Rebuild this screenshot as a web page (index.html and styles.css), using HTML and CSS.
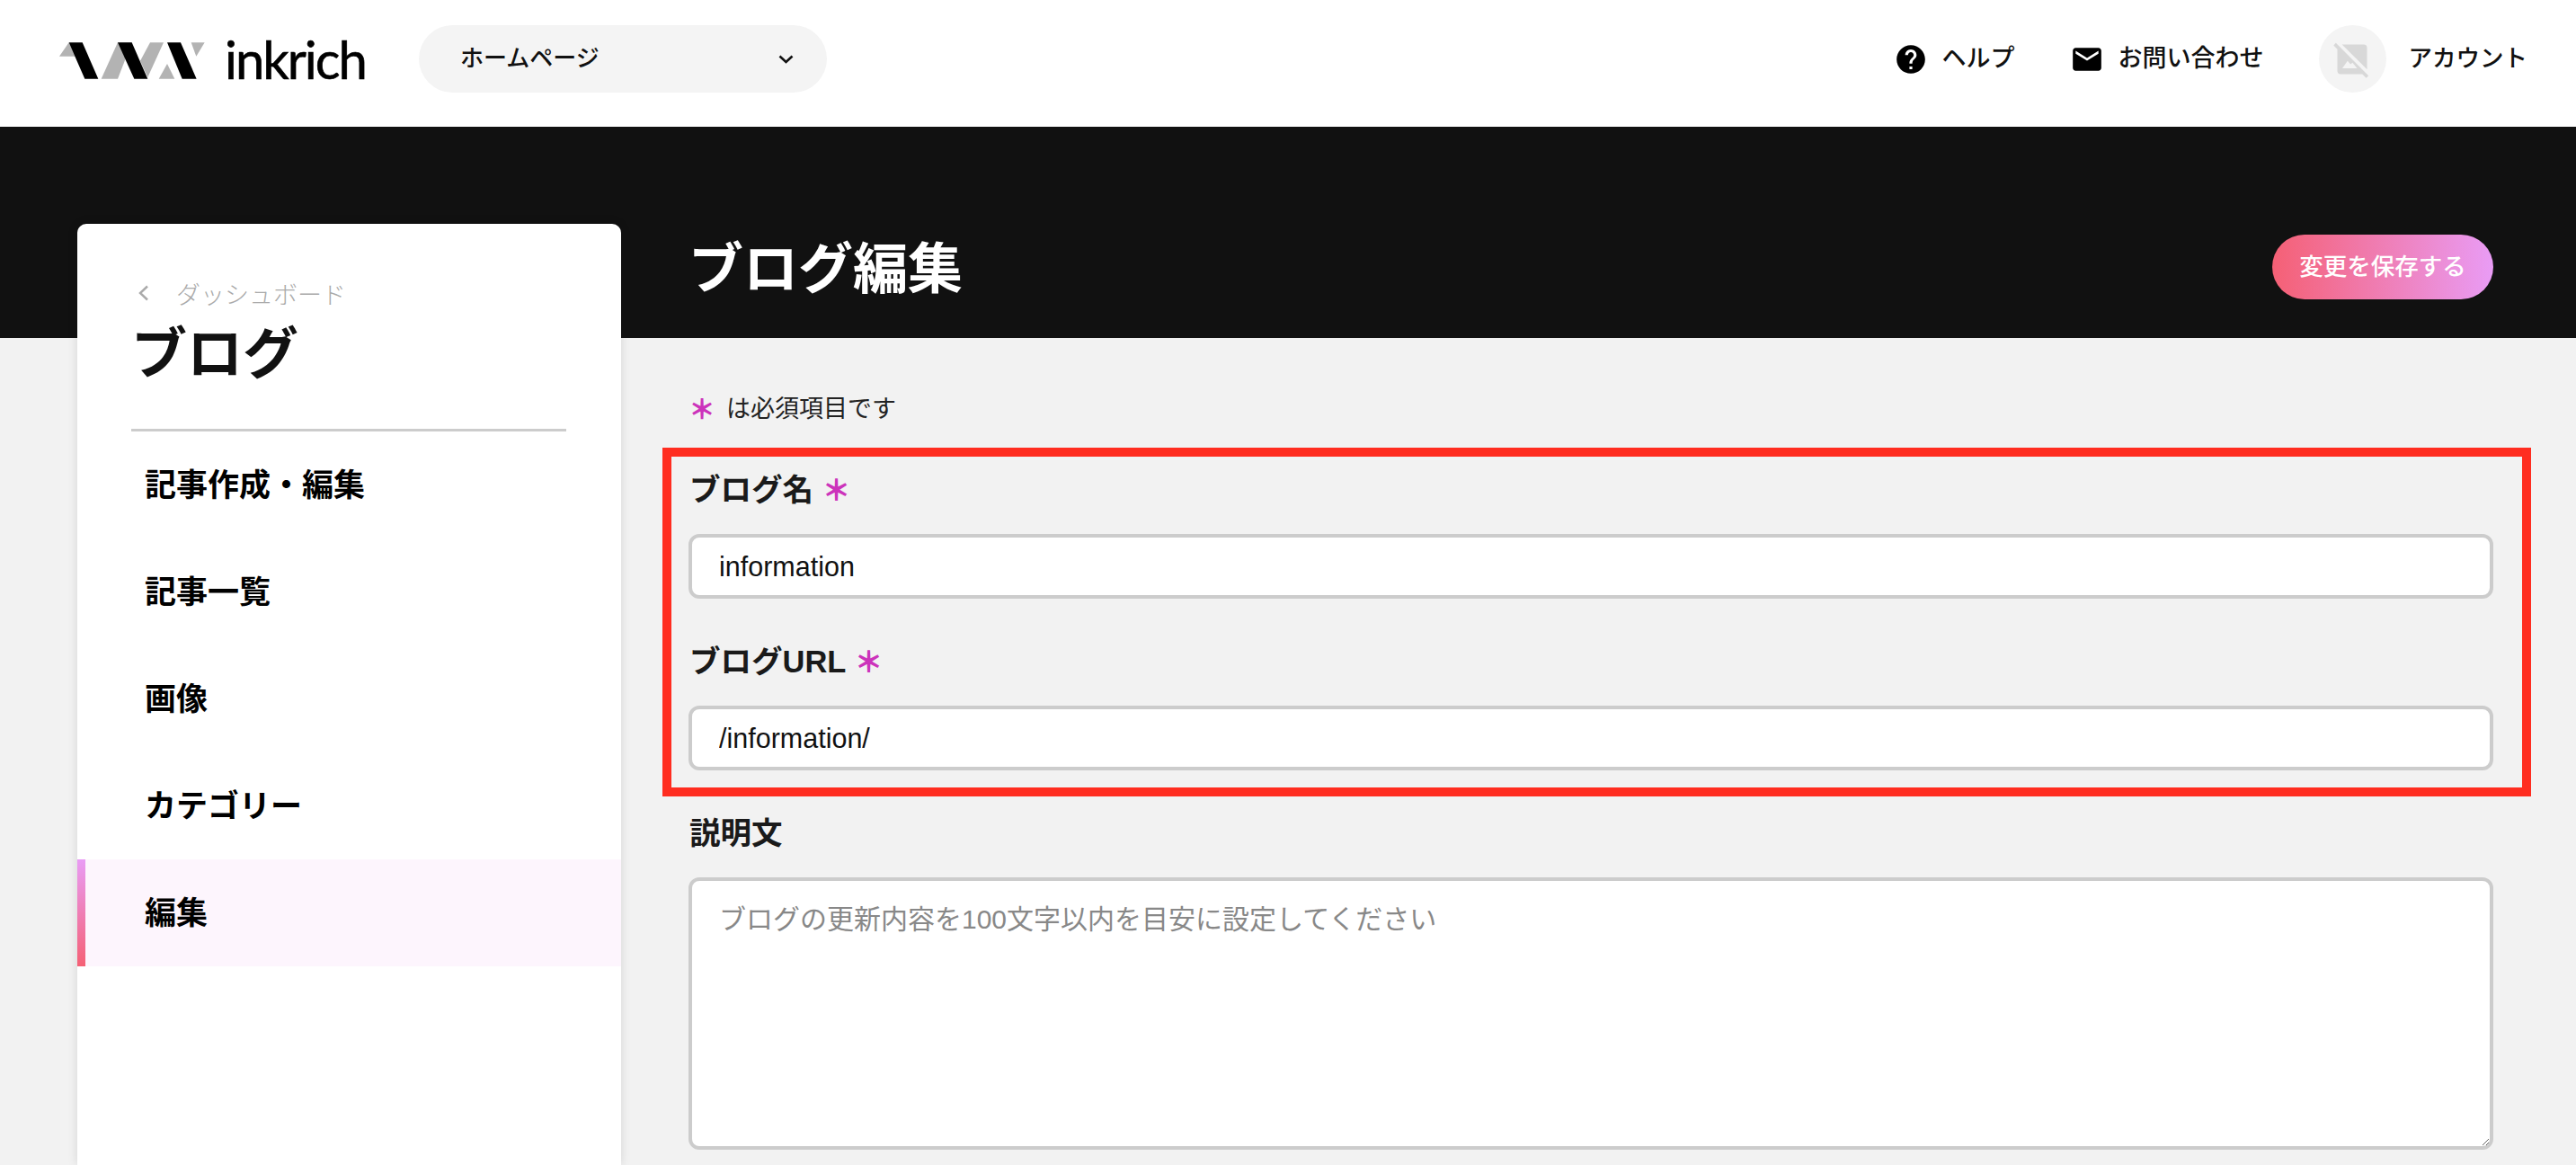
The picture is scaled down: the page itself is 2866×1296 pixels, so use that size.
FILE: index.html
```html
<!DOCTYPE html>
<html lang="ja">
<head>
<meta charset="utf-8">
<title>ブログ編集</title>
<link rel="stylesheet" href="styles.css">
</head>
<body>
<header class="topbar">
  <a class="brand">
    <svg class="brand-mark" viewBox="0 0 540 180" aria-hidden="true">
      <g fill="#b3b3b3">
        <polygon points="62,34 30,80 85,80"/>
        <polygon points="225,34 272,34 225,155 170,155"/>
        <polygon points="333,34 378,34 325,150 300,95"/>
        <polygon points="390,105 415,155 362,155"/>
        <polygon points="470,34 515,34 487,80"/>
      </g>
      <g fill="#000">
        <polygon points="62,34 107,34 160,155 115,155"/>
        <polygon points="225,34 272,34 325,155 280,155"/>
        <polygon points="390,34 435,34 488,155 440,155"/>
      </g>
    </svg>
    <span class="brand-name">inkrich</span>
  </a>
  <div class="site-select">
    <span class="top-text site-name">ホームページ</span>
    <svg class="site-chevron" viewBox="0 0 17 10" aria-hidden="true"><polyline points="1.5,1.5 8.5,8 15.5,1.5"/></svg>
  </div>
  <nav class="top-links">
    <a class="top-link">
      <svg class="top-icon" viewBox="0 0 24 24" aria-hidden="true"><path d="M12 2C6.48 2 2 6.48 2 12s4.48 10 10 10 10-4.48 10-10S17.52 2 12 2zm1 17h-2v-2h2v2zm2.07-7.75l-.9.92C13.45 12.9 13 13.5 13 15h-2v-.5c0-1.1.45-2.1 1.17-2.83l1.24-1.26c.37-.36.59-.86.59-1.41 0-1.1-.9-2-2-2s-2 .9-2 2H8c0-2.21 1.79-4 4-4s4 1.79 4 4c0 .88-.36 1.68-.93 2.25z"/></svg>
      <span class="top-text">ヘルプ</span>
    </a>
    <a class="top-link">
      <svg class="top-icon" viewBox="0 0 24 24" aria-hidden="true"><path d="M20 4H4c-1.1 0-1.99.9-1.99 2L2 18c0 1.1.9 2 2 2h16c1.1 0 2-.9 2-2V6c0-1.1-.9-2-2-2zm0 4l-8 5-8-5V6l8 5 8-5v2z"/></svg>
      <span class="top-text">お問い合わせ</span>
    </a>
    <a class="account">
      <span class="avatar">
        <svg class="avatar-icon" viewBox="0 0 24 24" aria-hidden="true">
          <path d="M21 18.17 5.83 3H19a2 2 0 0 1 2 2z"/>
          <path d="M20.49 23.31 18.17 21H5a2 2 0 0 1-2-2V5.83L.69 3.51 2.1 2.1l19.8 19.8z"/>
          <polygon class="avatar-peak" points="6,17.5 9.2,13 11,15 12.2,14 15,17.5"/>
        </svg>
      </span>
      <span class="top-text account-name">アカウント</span>
    </a>
  </nav>
</header>

<main class="layout">
  <aside class="sidebar">
    <div class="side-head">
      <a class="back">
        <svg class="back-chevron" viewBox="0 0 13 18" aria-hidden="true"><polyline points="11,1.5 3,9 11,16.5"/></svg>
        <span>ダッシュボード</span>
      </a>
      <h2 class="side-title">ブログ</h2>
    </div>
    <ul class="side-nav">
      <li class="side-item">記事作成・編集</li>
      <li class="side-item">記事一覧</li>
      <li class="side-item">画像</li>
      <li class="side-item">カテゴリー</li>
      <li class="side-item is-active">編集</li>
    </ul>
  </aside>

  <section class="content">
    <div class="page-head">
      <h1 class="page-title">ブログ編集</h1>
      <button class="save-btn" type="button">変更を保存する</button>
    </div>
    <form class="form">
      <p class="req-note"><span class="req">＊</span><span>は必須項目です</span></p>
      <div class="highlight">
        <div class="field">
          <label class="field-label">ブログ名 <span class="req">＊</span></label>
          <input class="input" type="text" value="information">
        </div>
        <div class="field">
          <label class="field-label">ブログURL <span class="req">＊</span></label>
          <input class="input" type="text" value="/information/">
        </div>
      </div>
      <div class="field field-desc">
        <label class="field-label">説明文</label>
        <textarea class="input textarea" placeholder="ブログの更新内容を100文字以内を目安に設定してください"></textarea>
      </div>
    </form>
  </section>
</main>
</body>
</html>
```

FILE: styles.css
```css
* { box-sizing: border-box; }

html, body {
  margin: 0;
}

body {
  height: 1296px;
  overflow: hidden;
  font-family: "Liberation Sans", "Noto Sans CJK JP", sans-serif;
  color: #111;
  background: #f2f2f2;
}

/* top bar */
.topbar {
  display: flex;
  align-items: center;
  height: 141px;
  padding: 0 54px 10px 56px;
  background: #fff;
}

.brand {
  display: flex;
  align-items: center;
  width: 410px;
}

.brand-mark {
  width: 180px;
  height: 60px;
  flex: none;
}

.brand-name {
  margin-left: 14px;
  font-family: "Lato", sans-serif;
  font-size: 58px;
  line-height: 60px;
  letter-spacing: -2px;
  color: #000;
  -webkit-text-stroke: 0.6px #000;
}

.site-select {
  display: flex;
  align-items: center;
  justify-content: space-between;
  width: 454px;
  height: 75px;
  padding: 0 37px 0 46px;
  border-radius: 38px;
  background: #f4f4f4;
}

.top-text {
  padding-bottom: 2px;
  font-size: 27px;
  line-height: 40px;
  font-weight: 500;
}

.site-name {
  font-size: 26px;
}

.site-chevron {
  width: 17px;
  height: 10px;
  fill: none;
  stroke: #111;
  stroke-width: 2.6;
}

.top-links {
  display: flex;
  align-items: center;
  gap: 61px;
  margin-left: auto;
}

.top-link {
  display: flex;
  align-items: center;
  gap: 16px;
}

.top-icon {
  width: 38px;
  height: 38px;
  fill: #000;
}

.account {
  display: flex;
  align-items: center;
  gap: 25px;
}

.account-name {
  font-size: 26.5px;
}

.avatar {
  display: flex;
  align-items: center;
  justify-content: center;
  width: 75px;
  height: 75px;
  border-radius: 50%;
  background: #f4f4f4;
}

.avatar-icon {
  width: 44px;
  height: 44px;
  fill: #d8d8d8;
}

.avatar .avatar-peak {
  fill: #f4f4f4;
}

/* page body */
.layout {
  display: flex;
  height: 1155px;
  padding: 108px 92px 0 86px;
  background: linear-gradient(#111 235px, #f2f2f2 235px);
}

.sidebar {
  flex: none;
  width: 605px;
  height: 1047px;
  border-radius: 10px 10px 0 0;
  background: #fff;
  box-shadow: 0 0 12px rgba(0, 0, 0, 0.12);
}

.side-head {
  height: 231px;
  margin: 0 61px 0 60px;
  padding-top: 62px;
  border-bottom: 3px solid #ccc;
}

.back {
  display: flex;
  align-items: center;
  gap: 30px;
  height: 30px;
  padding-left: 7px;
  font-size: 27px;
  font-weight: 300;
  color: #aaa;
}

.back-chevron {
  width: 13px;
  height: 18px;
  fill: none;
  stroke: #aaa;
  stroke-width: 2.4;
}

.side-title {
  margin: 15px 0 0 0;
  font-size: 62px;
  line-height: 78px;
  font-weight: 700;
  color: #111;
}

.side-nav {
  margin: 0;
  padding: 0;
  list-style: none;
}

.side-item {
  display: flex;
  align-items: center;
  height: 119px;
  padding: 0 0 7px 75px;
  font-size: 35px;
  font-weight: 700;
  color: #000;
}

.side-item.is-active {
  position: relative;
  background: #fdf5fd;
}

.side-item.is-active::before {
  content: "";
  position: absolute;
  left: 0;
  top: 0;
  bottom: 0;
  width: 9px;
  background: linear-gradient(#e99cf5, #f56075);
}

/* main column */
.content {
  flex: 1;
  min-width: 0;
  margin-left: 75px;
}

.page-head {
  display: flex;
  align-items: center;
  justify-content: space-between;
  height: 127px;
  padding-bottom: 31px;
}

.page-title {
  margin: 6px 0 0 0;
  font-size: 61px;
  line-height: 80px;
  font-weight: 700;
  color: #fff;
}

.save-btn {
  width: 246px;
  height: 72px;
  padding: 0 0 5px;
  border: 0;
  border-radius: 36px;
  background: linear-gradient(90deg, #f56075, #e99cf5);
  font-family: inherit;
  font-size: 26.5px;
  font-weight: 500;
  color: #fff;
}

.form {
  padding-top: 59px;
}

.req-note {
  display: flex;
  align-items: center;
  gap: 12px;
  height: 40px;
  margin: 0;
  padding: 0 0 5px 0;
  font-size: 27px;
  font-weight: 400;
  color: #222;
}

.req {
  font-family: "Noto Sans CJK JP", sans-serif;
  font-size: 30px;
  font-weight: 900;
  color: #cc33bb;
}

.highlight {
  display: flex;
  flex-direction: column;
  gap: 47px;
  margin: 23px -42px 0 -29px;
  padding: 14px 32px 19px 19px;
  border: 10px solid #ff2d20;
}

.field {
  display: flex;
  flex-direction: column;
  gap: 24px;
}

.field-desc {
  margin-top: 18px;
}

.field-label {
  height: 48px;
  padding-left: 1px;
  font-size: 34.5px;
  line-height: 46px;
  font-weight: 700;
  color: #1a1a1a;
}

.field-label .req {
  font-size: 32px;
  line-height: 0;
}

.input {
  display: block;
  width: 100%;
  height: 72px;
  padding: 0 30px;
  border: 4px solid #ccc;
  border-radius: 12px;
  background: #fff;
  font-family: "Liberation Sans", "Noto Sans CJK JP", sans-serif;
  font-size: 30.5px;
  color: #111;
  outline: none;
}

.textarea {
  height: 303px;
  padding: 25px 30px;
  font-size: 30px;
  line-height: 36px;
}

.textarea::placeholder {
  color: #888;
  opacity: 1;
}
```
